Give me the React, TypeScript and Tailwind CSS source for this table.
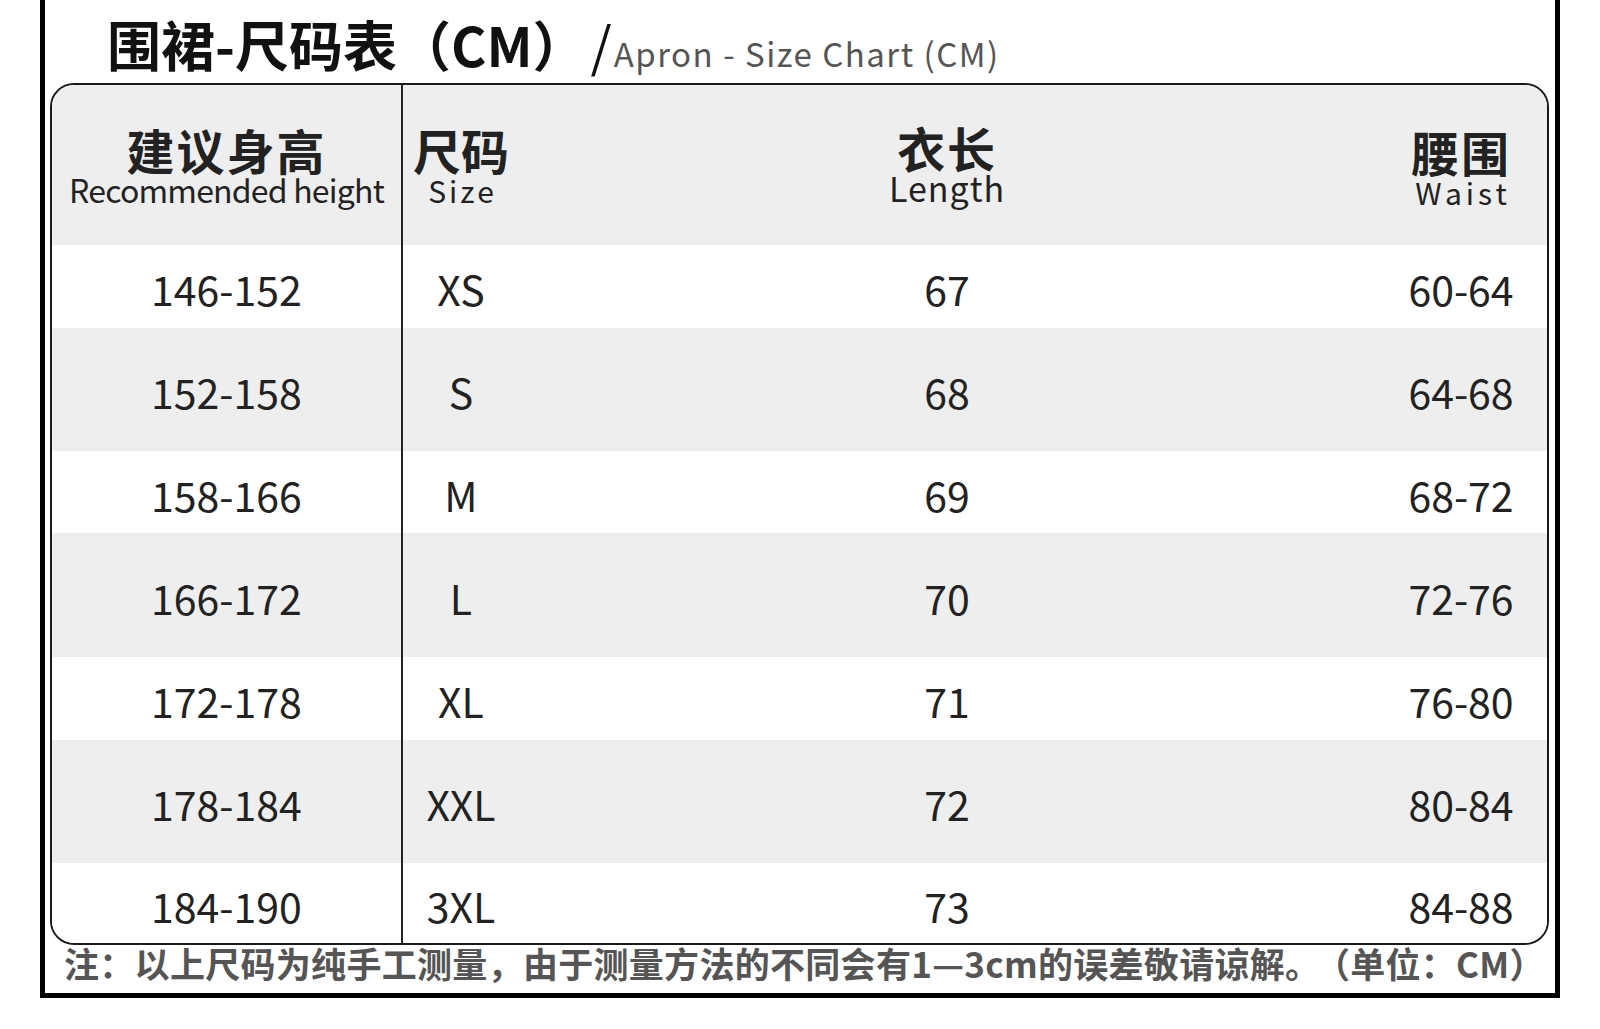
import React from "react";

const rows = [
  { h: "146-152", s: "XS", l: "67", w: "60-64", bg: "bg-white", ht: "h-[83px]" },
  { h: "152-158", s: "S", l: "68", w: "64-68", bg: "bg-[#eeeeee]", ht: "h-[123px]" },
  { h: "158-166", s: "M", l: "69", w: "68-72", bg: "bg-white", ht: "h-[82px]" },
  { h: "166-172", s: "L", l: "70", w: "72-76", bg: "bg-[#eeeeee]", ht: "h-[124px]" },
  { h: "172-178", s: "XL", l: "71", w: "76-80", bg: "bg-white", ht: "h-[83px]" },
  { h: "178-184", s: "XXL", l: "72", w: "80-84", bg: "bg-[#eeeeee]", ht: "h-[123px]" },
  { h: "184-190", s: "3XL", l: "73", w: "84-88", bg: "bg-white", ht: "h-[80px]" },
];

export default function App() {
  return (
    <div className="w-[1600px] h-[1029px] bg-white font-['Noto_Sans_CJK_SC','Noto_Sans',sans-serif] text-[#222]">
      <div className="ml-[40px] w-[1520px] h-[998px] border-x-[5px] border-b-[5px] border-black flex flex-col">
        {/* Title */}
        <div className="h-[83px] pl-[62px] pt-[17px] flex items-baseline leading-none whitespace-nowrap">
          <span className="text-[54px] font-bold text-[#111] leading-none">围裙-尺码表（CM）</span>
          <span className="text-[54px] font-normal text-[#111] leading-none ml-[4px]">/</span>
          <span className="text-[33px] text-[#555] tracking-[1.5px] leading-none ml-[2px]">Apron - Size Chart (CM)</span>
        </div>

        {/* Table */}
        <div className="ml-[5px] w-[1499px] h-[862px] border-2 border-[#1a1a1a] rounded-[24px] overflow-hidden flex flex-col">
          {/* header */}
          <div className="h-[160px] bg-[#eeeeee] grid grid-cols-[351px_116px_856px_172px]">
            <div className="border-r-2 border-[#222] flex flex-col items-center pt-[40px]">
              <div className="text-[48px] font-bold leading-none tracking-[2px] whitespace-nowrap">建议身高</div>
              <div className="text-[32px] leading-none tracking-[-0.8px] whitespace-nowrap">Recommended height</div>
            </div>
            <div className="flex flex-col items-center pt-[40px]">
              <div className="text-[48px] font-bold leading-none whitespace-nowrap">尺码</div>
              <div className="text-[30px] leading-none mt-[2px] tracking-[3px] pl-[3px] whitespace-nowrap">Size</div>
            </div>
            <div className="flex flex-col items-center pt-[38px]">
              <div className="text-[48px] font-bold leading-none tracking-[2px] whitespace-nowrap">衣长</div>
              <div className="text-[34px] leading-none tracking-[1px] whitespace-nowrap">Length</div>
            </div>
            <div className="flex flex-col items-center pt-[42px]">
              <div className="text-[48px] font-bold leading-none tracking-[2px] whitespace-nowrap">腰围</div>
              <div className="text-[30px] leading-none mt-[2px] tracking-[4px] pl-[4px] whitespace-nowrap">Waist</div>
            </div>
          </div>
          {rows.map((r) => (
            <div key={r.h} className={`${r.ht} ${r.bg} grid grid-cols-[351px_116px_856px_172px] text-[41px] leading-none`}>
              <div className="border-r-2 border-[#222] flex items-center justify-center pt-[4px]">{r.h}</div>
              <div className="flex items-center justify-center pt-[4px]">{r.s}</div>
              <div className="flex items-center justify-center pt-[4px]">{r.l}</div>
              <div className="flex items-center justify-center pt-[4px]">{r.w}</div>
            </div>
          ))}
        </div>

        {/* Note */}
        <div className="pl-[19px] text-[35px] font-bold text-[#555] leading-none tracking-[0.3px] whitespace-nowrap">
          注：以上尺码为纯手工测量，由于测量方法的不同会有1—3cm的误差敬请谅解。<span className="ml-[12px]">（单位：CM）</span>
        </div>
      </div>
    </div>
  );
}
